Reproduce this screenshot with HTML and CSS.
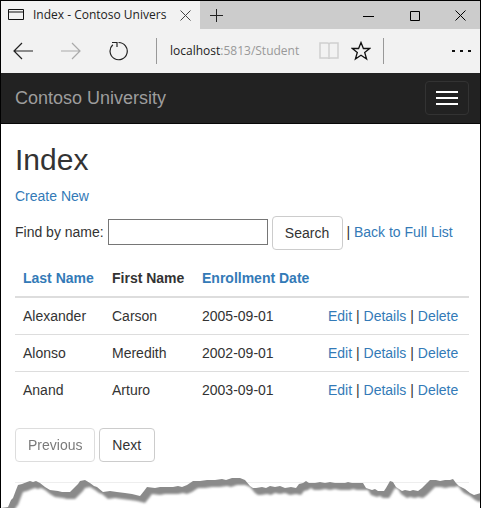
FILE: index.html
```html
<!DOCTYPE html>
<html>
  <head>
    <meta charset="UTF-8">
    <title>Index - Contoso University</title>
    <link rel="stylesheet" href="styles.css">
  </head>
  <body>
    <div class="window">
      <!-- Barra de abas -->
      <div class="tabbar">
        <div class="tab">
          <svg class="tab-icon" width="16" height="12" viewBox="0 0 16 12"><path d="M.5.5h15v10H.5zM.5 3h15" fill="none" stroke="#111"/></svg>
          <span class="tab-title">Index - Contoso Univers</span>
          <svg class="tab-close" width="11" height="11" viewBox="0 0 11 11"><path d="M.5.5l10 10M10.5.5l-10 10" fill="none" stroke="#444"/></svg>
        </div>
        <svg class="tab-plus" width="13" height="13" viewBox="0 0 13 13"><path d="M6.5 0v13M0 6.5h13" fill="none" stroke="#222"/></svg>
        <div class="win-controls">
          <svg width="11" height="11" viewBox="0 0 11 11"><path d="M0 6.5h11" fill="none" stroke="#000"/></svg>
          <svg width="11" height="11" viewBox="0 0 11 11"><path d="M1.500 1.500h9v9h-9z" fill="none" stroke="#000"/></svg>
          <svg width="11" height="11" viewBox="0 0 11 11"><path d="M.5.5l10 10M10.5.5l-10 10" fill="none" stroke="#000"/></svg>
        </div>
      </div>

      <!-- Barra de endereco -->
      <div class="toolbar">
        <svg width="20" height="18" viewBox="0 0 20 18"><path d="M20 9H1M9 1L1 9l8 8" fill="none" stroke="#222" stroke-width="1.2"/></svg>
        <svg class="nav-next" width="20" height="18" viewBox="0 0 20 18"><path d="M0 9h19M11 1l8 8-8 8" fill="none" stroke="#aaa" stroke-width="1.2"/></svg>
        <svg class="nav-next" width="20" height="20" viewBox="0 0 20 20"><path d="M3.800 3.800A8.600 8.600 0 1 0 9.500 1.500M3 1.500H8V6" fill="none" stroke="#222" stroke-width="1.2"/></svg>
        <span class="sep sep-url"></span>
        <div class="url">localhost<span class="url-rest">:5813/Student</span></div>
        <svg width="20" height="18" viewBox="0 0 20 18"><path d="M1 1h7.500c.8 0 1.500.5 1.500 1.500 0-1 .7-1.500 1.500-1.500H19v15h-7.500c-.8 0-1.500.5-1.500 1 0-.5-.7-1-1.500-1H1zM10 2.500V17" fill="none" stroke="#cfcfcf" stroke-width="1.500"/></svg>
        <svg class="star" width="20" height="20" viewBox="0 0 20 20"><path d="M10 1.500l2.400 6h6.300l-5 4 1.900 6.500L10 14.300l-5.600 3.700 1.900-6.500-5-4h6.300z" fill="none" stroke="#111" stroke-width="1.300"/></svg>
        <span class="sep sep-star"></span>
        <div class="dots"><i></i><i></i><i></i></div>
      </div>

      <nav class="navbar">
        <a class="brand">Contoso University</a>
        <button class="navbar-toggle"><span></span><span></span><span></span></button>
      </nav>

      <div class="content">
        <h1>Index</h1>
        <p><a>Create New</a></p>

        <form class="search-form">
          Find by name: <input type="text" class="search-box"> <button type="button" class="btn btn-search">Search</button> | <a>Back to Full List</a>
        </form>

        <table>
          <thead>
            <tr>
              <th class="col-last"><a>Last Name</a></th>
              <th class="col-first">First Name</th>
              <th class="col-date"><a>Enrollment Date</a></th>
              <th></th>
            </tr>
          </thead>
          <tbody>
            <tr>
              <td>Alexander</td>
              <td>Carson</td>
              <td>2005-09-01</td>
              <td><a>Edit</a> | <a>Details</a> | <a>Delete</a></td>
            </tr>
            <tr>
              <td>Alonso</td>
              <td>Meredith</td>
              <td>2002-09-01</td>
              <td><a>Edit</a> | <a>Details</a> | <a>Delete</a></td>
            </tr>
            <tr>
              <td>Anand</td>
              <td>Arturo</td>
              <td>2003-09-01</td>
              <td><a>Edit</a> | <a>Details</a> | <a>Delete</a></td>
            </tr>
          </tbody>
        </table>

        <div class="pager">
          <button type="button" class="btn btn-disabled">Previous</button>
          <button type="button" class="btn btn-next">Next</button>
        </div>

        <hr>
      </div>

      <!-- Borda rasgada por cima da pagina -->
      <svg class="torn" width="481" height="38" viewBox="0 470 481 38">
        <defs>
          <filter id="soft" x="-5%" y="-50%" width="110%" height="200%"><feGaussianBlur stdDeviation="1.2"/></filter>
          <clipPath id="below"><path d="M0 508L8 507 11 500 13 498 16 490 18 485 22 484 27 482 30 481 33 482 36 481 40 483 45 487 50 490 58 491 62 492 70 492 74 488 78 484 80 481 85 480 90 483 94 486 97 487 103 492 110 491 117 492 125 493 132 494 140 496 144 491 147 487 155 488 160 487 173 487 178 486 182 487 187 485 190 483 193 481 200 481 207 480 215 480 222 479 226 480 232 478 240 478 245 480 250 486 253 488 256 488 262 487 266 488 270 486 275 487 280 486 285 488 291 487 296 488 299 484 303 483 306 481 309 483 315 483 320 482 325 483 330 482 335 483 345 483 348 482 352 483 363 483 366 488 372 490 375 489 378 491 384 491 386 488 390 481 393 482 396 487 402 491 405 490 410 491 413 490 418 491 422 488 426 484 430 480 436 480 440 481 445 480 450 480 453 479 456 483 459 486 465 489 470 493 474 495 481 493V508z"/></clipPath>
        </defs>
        <rect x="0" y="470" width="481" height="38" fill="#fff" clip-path="url(#below)"/>
        <g clip-path="url(#below)">
          <path class="torn-shadow" filter="url(#soft)" d="M-20 460V508H8L11 500 13 498 16 490 18 485 22 484 27 482 30 481 33 482 36 481 40 483 45 487 50 490 58 491 62 492 70 492 74 488 78 484 80 481 85 480 90 483 94 486 97 487 103 492 110 491 117 492 125 493 132 494 140 496 144 491 147 487 155 488 160 487 173 487 178 486 182 487 187 485 190 483 193 481 200 481 207 480 215 480 222 479 226 480 232 478 240 478 245 480 250 486 253 488 256 488 262 487 266 488 270 486 275 487 280 486 285 488 291 487 296 488 299 484 303 483 306 481 309 483 315 483 320 482 325 483 330 482 335 483 345 483 348 482 352 483 363 483 366 488 372 490 375 489 378 491 384 491 386 488 390 481 393 482 396 487 402 491 405 490 410 491 413 490 418 491 422 488 426 484 430 480 436 480 440 481 445 480 450 480 453 479 456 483 459 486 465 489 470 493 474 495 481 493H500V460z"/>
        </g>
      </svg>
    </div>
  </body>
</html>
```

FILE: styles.css
```css
* {
  box-sizing: border-box;
}

body {
  margin: 0;
  background: #fff;
  font-family: "Liberation Sans", Arial, sans-serif;
  font-size: 14px;
  line-height: 20px;
  color: #333;
}

a {
  color: #337ab7;
}

.window {
  position: relative;
  height: 508px;
  overflow: hidden;
  border: 1px solid #000;
  border-bottom: none;
}

/* Barra de abas */
.tabbar {
  display: flex;
  align-items: center;
  height: 28px;
  background: #ccc;
}

.tab {
  display: flex;
  align-items: center;
  width: 199px;
  height: 28px;
  padding-left: 7px;
  background: #f2f2f2;
  font-family: "Open Sans", sans-serif;
  font-size: 12px;
  color: #222;
}

.tab-title {
  width: 136px;
  margin-left: 9px;
  white-space: nowrap;
}

.tab-close {
  margin-left: 11px;
}

.tab-plus {
  margin-left: 10px;
}

.win-controls {
  display: flex;
  gap: 35px;
  margin-left: auto;
  padding-right: 14px;
}

/* Barra de endereco */
.toolbar {
  display: flex;
  align-items: center;
  height: 44px;
  padding-left: 12px;
  background: #f2f2f2;
}

.nav-next {
  margin-left: 28px;
}

.sep {
  width: 1px;
  height: 26px;
  background: #999;
}

.sep-url {
  margin-left: 27px;
}

.sep-star {
  margin-left: 12px;
}

.url {
  width: 149px;
  margin-left: 13px;
  font-family: "Open Sans", sans-serif;
  font-size: 12px;
  color: #222;
  white-space: nowrap;
}

.url-rest {
  color: #999;
}

.star {
  margin-left: 12px;
}

.dots {
  display: flex;
  gap: 5px;
  margin-left: auto;
  padding-right: 9px;
}

.dots i {
  width: 3px;
  height: 2px;
  background: #111;
}

/* Navbar */
.navbar {
  display: flex;
  align-items: center;
  justify-content: space-between;
  height: 51px;
  padding: 0 11px 0 14px;
  background: #222;
  border-bottom: 1px solid #080808;
}

.brand {
  font-size: 18px;
  color: #9d9d9d;
}

.navbar-toggle {
  display: flex;
  flex-direction: column;
  gap: 4px;
  width: 44px;
  height: 34px;
  padding: 9px 10px;
  background: transparent;
  border: 1px solid #333;
  border-radius: 4px;
}

.navbar-toggle span {
  width: 22px;
  height: 2px;
  background: #fff;
}

/* Conteudo */
.content {
  padding: 0 11px 0 14px;
}

h1 {
  margin: 19px 0 10px;
  font-size: 30px;
  font-weight: 500;
  line-height: 33px;
}

p {
  margin: 0 0 10px;
}

.search-form {
  margin-bottom: 10px;
}

.search-box {
  width: 160px;
  height: 26px;
  padding: 1px 2px;
  border: 1px solid #767676;
  vertical-align: 1px;
}

.btn {
  height: 34px;
  padding: 6px 12px;
  background: #fff;
  border: 1px solid #ccc;
  border-radius: 4px;
  font-family: inherit;
  font-size: 14px;
  line-height: 20px;
  color: #333;
}

.btn-search {
  width: 71px;
  vertical-align: -1px;
}

.btn-next {
  width: 56px;
  text-align: left;
}

.btn-disabled {
  opacity: .65;
}

/* Tabela de alunos */
table {
  width: 100%;
  margin-bottom: 20px;
  border-collapse: collapse;
}

th, td {
  padding: 8px;
  text-align: left;
  border-top: 1px solid #ddd;
}

th {
  border-top: none;
  border-bottom: 2px solid #ddd;
}

.col-last {
  width: 89px;
}

.col-first {
  width: 90px;
}

.col-date {
  width: 126px;
}

hr {
  margin: 20px 0 0;
  border: none;
  border-top: 1px solid #eee;
}

.torn {
  position: absolute;
  left: -1px;
  bottom: 0;
  display: block;
}

.torn-shadow {
  fill: #8a8a8a;
  transform: translate(5px, 7px);
}
```
